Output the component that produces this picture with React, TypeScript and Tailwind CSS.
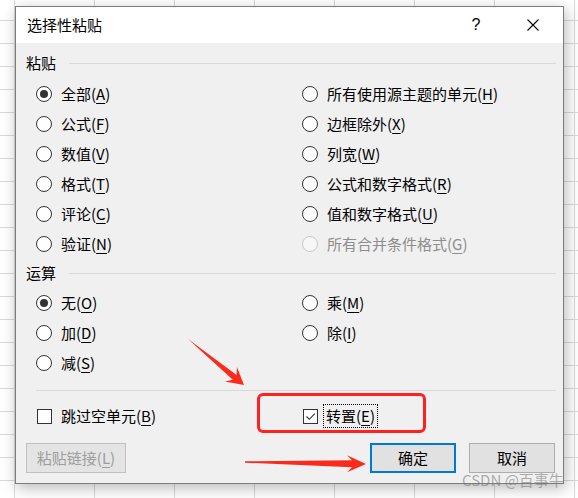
import React from "react";

function Acc({ text, acc }: { text: string; acc: string }) {
  return (
    <span>
      {text}(<span className="underline decoration-1 underline-offset-[3px]">{acc}</span>)
    </span>
  );
}

function Radio({
  text,
  acc,
  checked = false,
  disabled = false,
}: {
  text: string;
  acc: string;
  checked?: boolean;
  disabled?: boolean;
}) {
  return (
    <div className="flex h-[30px] items-center">
      <span
        className={
          disabled
            ? "flex h-[16px] w-[16px] items-center justify-center rounded-full border border-[#c8c8c8] bg-[#f7f7f7]"
            : "flex h-[16px] w-[16px] items-center justify-center rounded-full border border-[#333333] bg-white"
        }
      >
        {checked && <span className="h-[8px] w-[8px] rounded-full bg-[#333333]" />}
      </span>
      <span className={disabled ? "ml-[9px] text-[#8d8d8d]" : "ml-[9px] text-black"}>
        <Acc text={text} acc={acc} />
      </span>
    </div>
  );
}

function Header({ text }: { text: string }) {
  return (
    <div className="flex h-[20px] items-center pl-[10px] pr-[7px]">
      <span>{text}</span>
      <span className="ml-[13px] h-px flex-1 bg-[#d9d9d9]" />
    </div>
  );
}

export default function App() {
  return (
    <div className="relative h-[498px] w-[578px] overflow-hidden bg-white bg-[linear-gradient(to_right,#d9d9d9_1px,transparent_1px),linear-gradient(to_bottom,#d9d9d9_1px,transparent_1px)] bg-size-[80px_23px] bg-position-[14px_20px] font-['Noto_Sans_CJK_SC','Microsoft_YaHei',sans-serif] text-[15px] leading-[20px] text-black">
      {/* dialog window */}
      <div className="absolute left-[15px] top-[6px] flex h-[478px] w-[549px] flex-col border border-[#7c7c7c] bg-[#f0f0f0] shadow-[2px_4px_14px_rgba(0,0,0,0.28)]">
        {/* title bar */}
        <div className="flex h-[36px] items-center bg-white pl-[11px] pr-[7px]">
          <span className="flex-1">选择性粘贴</span>
          <span className="flex w-[46px] justify-center font-['Liberation_Sans',sans-serif] text-[16px]">?</span>
          <span className="ml-[11px] flex w-[46px] justify-center">
            <svg width="12" height="12" viewBox="0 0 12 12">
              <path d="M0.5 0.5 L11.5 11.5 M11.5 0.5 L0.5 11.5" stroke="#000" strokeWidth="1.1" />
            </svg>
          </span>
        </div>

        {/* body */}
        <div className="flex flex-1 flex-col">
          <div className="mt-[10px]">
            <Header text="粘贴" />
          </div>
          <div className="mt-[6px] grid grid-cols-[266px_1fr] pl-[20px]">
            <Radio text="全部" acc="A" checked />
            <Radio text="所有使用源主题的单元" acc="H" />
            <Radio text="公式" acc="F" />
            <Radio text="边框除外" acc="X" />
            <Radio text="数值" acc="V" />
            <Radio text="列宽" acc="W" />
            <Radio text="格式" acc="T" />
            <Radio text="公式和数字格式" acc="R" />
            <Radio text="评论" acc="C" />
            <Radio text="值和数字格式" acc="U" />
            <Radio text="验证" acc="N" />
            <Radio text="所有合并条件格式" acc="G" disabled />
          </div>

          <div className="mt-[4px]">
            <Header text="运算" />
          </div>
          <div className="mt-[5px] grid grid-cols-[266px_1fr] pl-[20px]">
            <Radio text="无" acc="O" checked />
            <Radio text="乘" acc="M" />
            <Radio text="加" acc="D" />
            <Radio text="除" acc="I" />
            <Radio text="减" acc="S" />
          </div>

          <div className="ml-[20px] mr-[7px] mt-[12px] h-px bg-[#d9d9d9]" />

          <div className="mt-[10px] grid h-[30px] grid-cols-[266px_1fr] pl-[20px]">
            <div className="flex items-center">
              <span className="ml-px h-[15px] w-[15px] border border-[#333333] bg-white" />
              <span className="ml-[9px]">
                <Acc text="跳过空单元" acc="B" />
              </span>
            </div>
            <div className="flex items-center">
              <span className="ml-px flex h-[15px] w-[15px] items-center justify-center border border-[#333333] bg-white">
                <svg width="13" height="13" viewBox="0 0 13 13">
                  <path d="M2.5 6.5 L5.3 9.3 L10.8 3.6" fill="none" stroke="#333" strokeWidth="1.1" />
                </svg>
              </span>
              <span className="ml-[5px] flex h-[24px] items-center border border-dotted border-black px-[2px]">
                <Acc text="转置" acc="E" />
              </span>
            </div>
          </div>

          <div className="mt-[12px] flex h-[30px] pl-[10px] pr-[8px]">
            <button className="flex h-[30px] w-[100px] items-center justify-center border border-[#c0c0c0] bg-[#e4e4e4] text-[#9d9d9d]">
              <Acc text="粘贴链接" acc="L" />
            </button>
            <div className="flex-1" />
            <button className="flex h-[30px] w-[86px] items-center justify-center border-2 border-[#0078d7] bg-[#e1e1e1]">
              确定
            </button>
            <button className="ml-[13px] flex h-[30px] w-[86px] items-center justify-center border border-[#adadad] bg-[#e1e1e1]">
              取消
            </button>
          </div>
        </div>
      </div>

      {/* red highlight box */}
      <div className="absolute left-[257px] top-[393px] h-[40px] w-[169px] rounded-[6px] border-[3px] border-[#ff2020]" />

      {/* red arrows */}
      <svg className="absolute left-0 top-0" width="578" height="498" viewBox="0 0 578 498">
        <polygon
          points="188,339 232.8,379.7 224.9,381.5 244,385 236.9,366.9 236.6,375.1"
          fill="#fa2a1c"
        />
        <polygon
          points="245,461.3 352,460.3 347,455.2 366,464 347,472.2 352,467.3 245,462.7"
          fill="#fa2a1c"
        />
      </svg>

      {/* watermark */}
      <div className="absolute left-[462px] top-[470px] text-[15px] leading-[20px] text-[rgba(110,110,110,0.55)]">
        CSDN @百事牛
      </div>
    </div>
  );
}
